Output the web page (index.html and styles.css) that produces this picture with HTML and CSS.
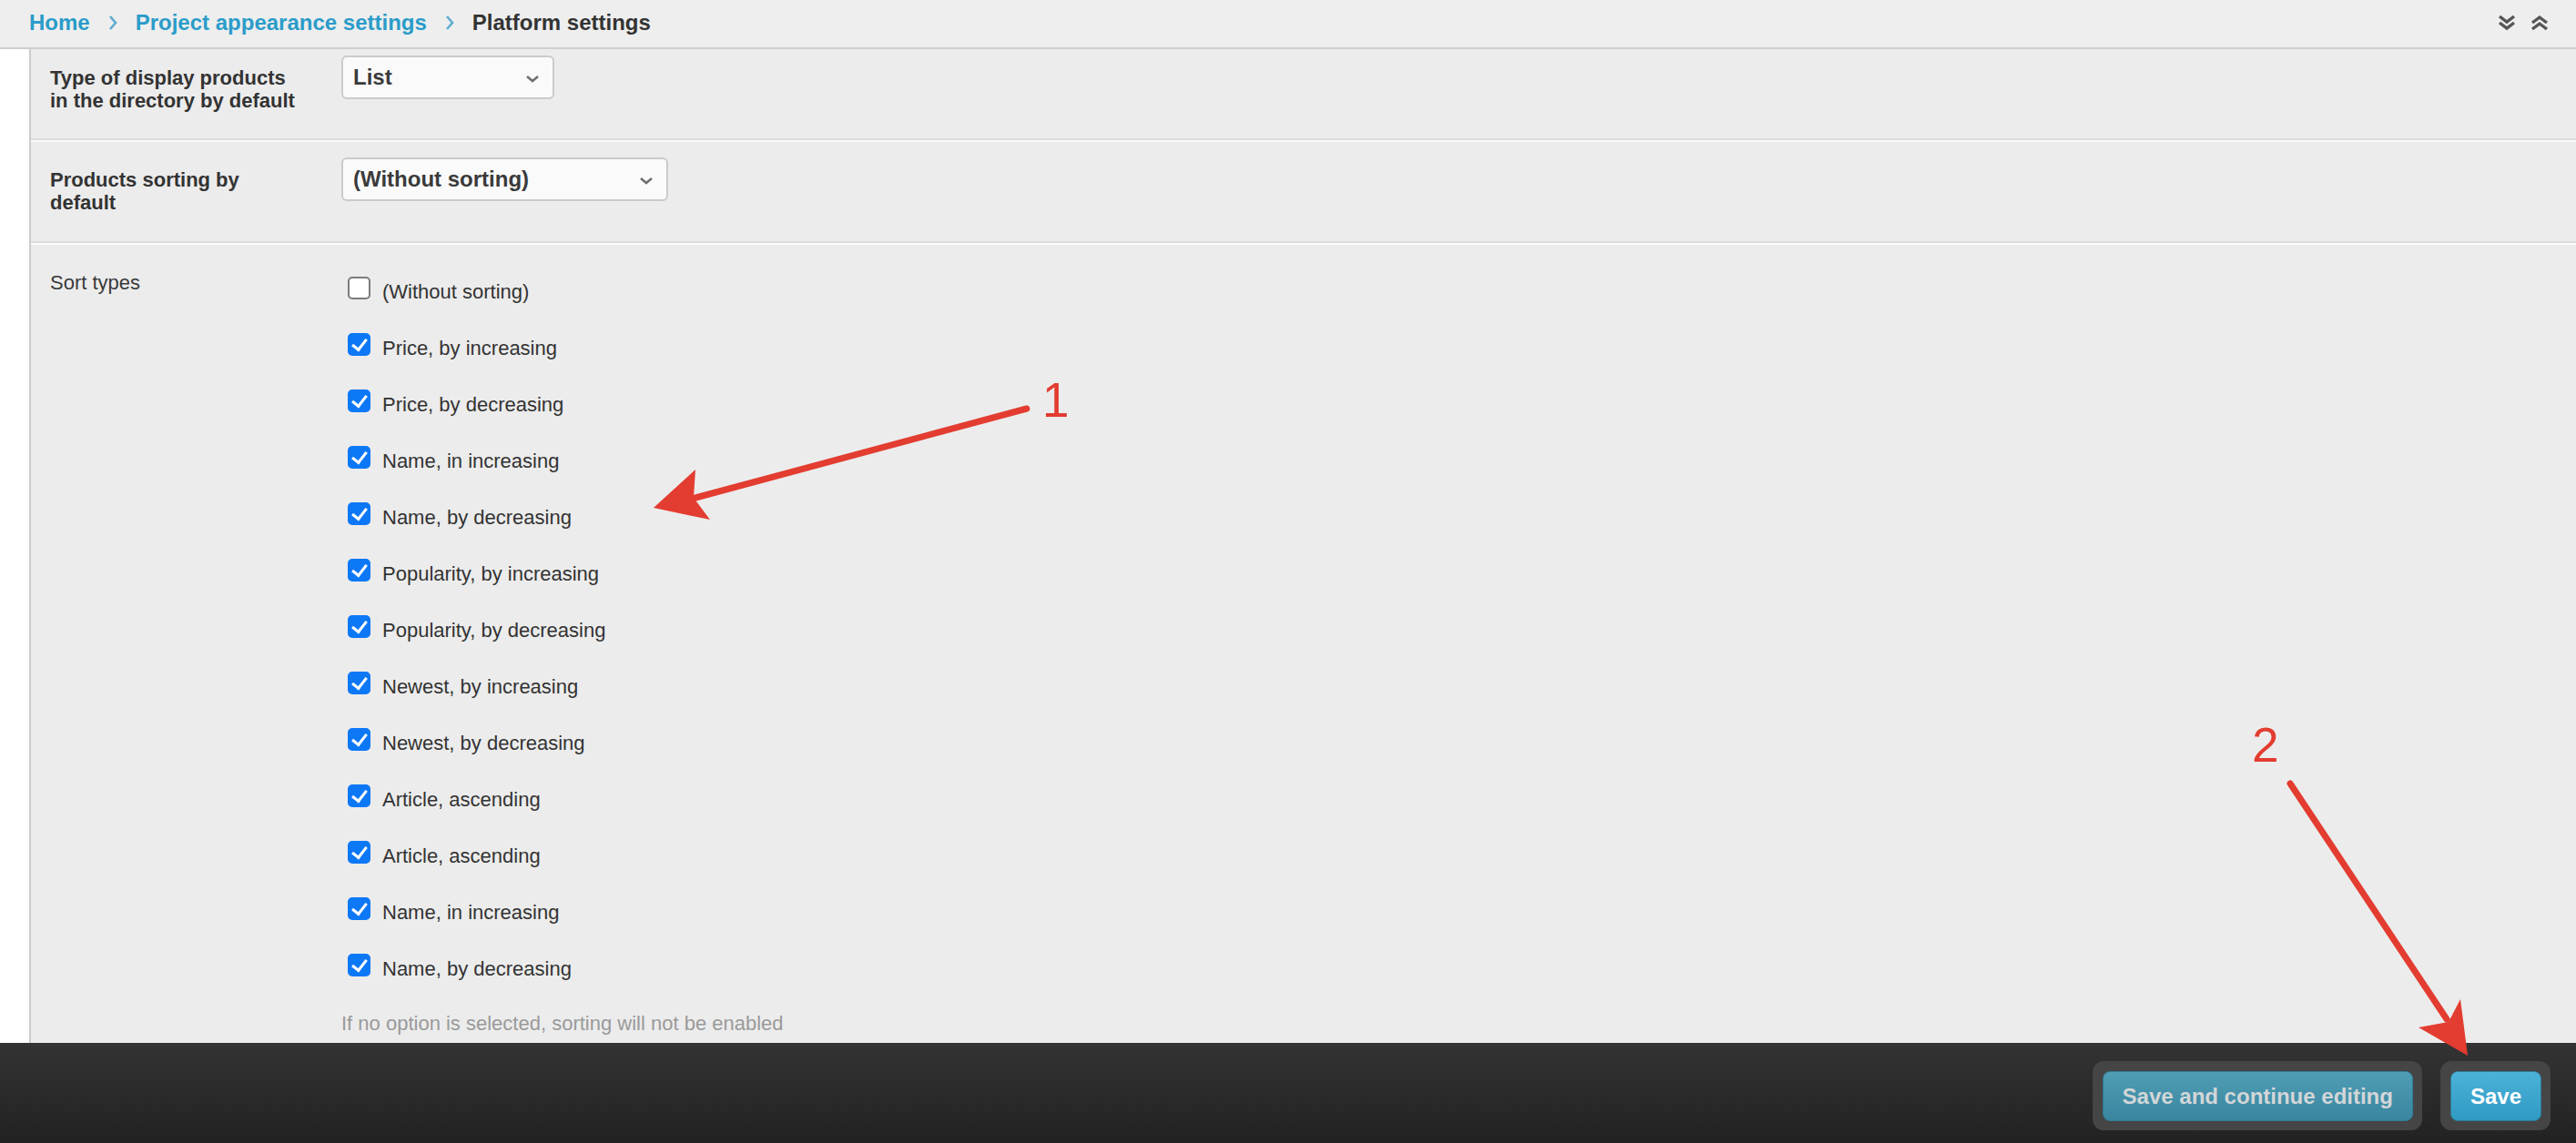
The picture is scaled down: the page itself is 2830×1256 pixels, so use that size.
FILE: index.html
```html
<!DOCTYPE html>
<html lang="en">
<head>
  <meta charset="UTF-8" />
  <title>Platform settings</title>
  <link rel="stylesheet" href="styles.css">
</head>
<body>

  <!-- Breadcrumbs -->
  <div class="breadcrumb">
    <div class="crumbs">
      <a href="#">Home</a>
      <svg class="sep" viewBox="0 0 10 18"><polyline points="2,2 8,9 2,16" /></svg>
      <a href="#">Project appearance settings</a>
      <svg class="sep" viewBox="0 0 10 18"><polyline points="2,2 8,9 2,16" /></svg>
      <span class="current">Platform settings</span>
    </div>
    <div class="collapse-icons">
      <svg viewBox="0 0 22 20"><polyline points="3,3 11,9 19,3" /><polyline points="3,10 11,16 19,10" /></svg>
      <svg viewBox="0 0 22 20"><polyline points="3,10 11,4 19,10" /><polyline points="3,17 11,11 19,17" /></svg>
    </div>
  </div>

  <div class="page">
    <div class="sidebar"></div>

    <div class="content">
      <div class="row row-first">
        <div class="row-label"><span>Type of display products in the directory by default</span></div>
        <div class="field">
          <div class="select select-short">
            List
            <svg class="select-arrow" viewBox="0 0 16 10"><polyline points="2,2 8,7 14,2" /></svg>
          </div>
        </div>
      </div>

      <div class="row">
        <div class="row-label"><span>Products sorting by default</span></div>
        <div class="field">
          <div class="select select-wide">
            (Without sorting)
            <svg class="select-arrow" viewBox="0 0 16 10"><polyline points="2,2 8,7 14,2" /></svg>
          </div>
        </div>
      </div>

      <div class="row">
        <div class="row-label plain"><span>Sort types</span></div>
        <div class="field">
          <div class="options">
            <label class="option"><input type="checkbox"><span>(Without sorting)</span></label>
            <label class="option"><input type="checkbox" checked><span>Price, by increasing</span></label>
            <label class="option"><input type="checkbox" checked><span>Price, by decreasing</span></label>
            <label class="option"><input type="checkbox" checked><span>Name, in increasing</span></label>
            <label class="option"><input type="checkbox" checked><span>Name, by decreasing</span></label>
            <label class="option"><input type="checkbox" checked><span>Popularity, by increasing</span></label>
            <label class="option"><input type="checkbox" checked><span>Popularity, by decreasing</span></label>
            <label class="option"><input type="checkbox" checked><span>Newest, by increasing</span></label>
            <label class="option"><input type="checkbox" checked><span>Newest, by decreasing</span></label>
            <label class="option"><input type="checkbox" checked><span>Article, ascending</span></label>
            <label class="option"><input type="checkbox" checked><span>Article, ascending</span></label>
            <label class="option"><input type="checkbox" checked><span>Name, in increasing</span></label>
            <label class="option"><input type="checkbox" checked><span>Name, by decreasing</span></label>
          </div>
          <div class="hint">If no option is selected, sorting will not be enabled</div>
        </div>
      </div>
    </div>
  </div>

  <!-- Footer actions -->
  <div class="footer">
    <div class="btn-wrap"><button class="btn btn-secondary">Save and continue editing</button></div>
    <div class="btn-wrap"><button class="btn btn-primary">Save</button></div>
  </div>

  <!-- Annotation arrows -->
  <svg class="annotations" viewBox="0 0 2830 1256">
    <line x1="1128" y1="449" x2="764" y2="547" />
    <polygon points="718,558 764,516 762,547 780,571" />
    <text x="1145" y="458">1</text>

    <line x1="2516" y1="861" x2="2688" y2="1120" />
    <polygon points="2711,1160 2703,1098 2690,1123 2657,1129" />
    <text x="2474" y="837">2</text>
  </svg>

</body>
</html>
```

FILE: styles.css
```css
* {
  box-sizing: border-box;
}
body {
  margin: 0;
  font-family: "Liberation Sans", Arial, sans-serif;
  color: #333;
  background: #fff;
  height: 100vh;
  display: flex;
  flex-direction: column;
  overflow: hidden;
  position: relative;
}

/* Breadcrumbs */
.breadcrumb {
  flex-shrink: 0;
  height: 54px;
  background: #eee;
  border-bottom: 2px solid #cfcfcf;
  display: flex;
  align-items: center;
  justify-content: space-between;
  padding: 0 29px 2px 32px;
  font-size: 24px;
  font-weight: bold;
}
.crumbs {
  display: flex;
  align-items: center;
}
.crumbs a {
  color: #2a9cc9;
  text-decoration: none;
}
.crumbs .current {
  color: #333;
}
.crumbs .sep {
  width: 10px;
  height: 18px;
  margin: 0 20px;
  fill: none;
  stroke: #5eacd0;
  stroke-width: 2.6;
}
.collapse-icons {
  display: flex;
  gap: 14px;
}
.collapse-icons svg {
  width: 22px;
  height: 20px;
  fill: none;
  stroke: #555;
  stroke-width: 3.4;
}

/* Content */
.page {
  flex: 1;
  display: flex;
  min-height: 0;
}
.sidebar {
  width: 32px;
  flex-shrink: 0;
  background: #fff;
}
.content {
  flex: 1;
  background: #ececec;
  border-left: 2px solid #cdcdcd;
  overflow: hidden;
}
.row {
  display: flex;
  padding: 17px 21px 30px;
  border-bottom: 2px solid #dcdcdc;
}
.row + .row {
  border-top: 2px solid #fafafa;
}
.row-first {
  padding-top: 7px;
  padding-bottom: 29px;
}
.row-label {
  width: 320px;
  flex-shrink: 0;
  padding-top: 12px;
  font-size: 22px;
  line-height: 25px;
  font-weight: bold;
}
.row-label span {
  display: block;
  max-width: 276px;
}
.row-label.plain {
  font-weight: normal;
  color: #3a3a3a;
}
.select {
  position: relative;
  height: 48px;
  border: 2px solid #cbcbcb;
  border-radius: 6px;
  background: #fafafa;
  padding-left: 11px;
  font-size: 24px;
  font-weight: bold;
  line-height: 44px;
  color: #3a3a3a;
}
.select-short {
  width: 234px;
}
.select-wide {
  width: 359px;
}
.select-arrow {
  position: absolute;
  right: 14px;
  top: 19px;
  width: 16px;
  height: 10px;
  fill: none;
  stroke: #707070;
  stroke-width: 2.6;
}

/* Sort types */
.options {
  padding-top: 18px;
}
.option {
  display: flex;
  gap: 13px;
  margin-left: 7px;
  font-size: 22px;
  line-height: 25px;
  color: #333;
}
.option + .option {
  margin-top: 33px;
}
.option span {
  padding-top: 4px;
}
.option input {
  appearance: none;
  -webkit-appearance: none;
  position: relative;
  flex-shrink: 0;
  width: 25px;
  height: 25px;
  margin: 0;
  border: 2px solid #7b7b7b;
  border-radius: 5px;
  background: #fff;
}
.option input:checked {
  background: #0d78f6;
  border-color: #0d78f6;
}
.option input:checked::after {
  content: "";
  position: absolute;
  left: 6px;
  top: 1px;
  width: 7px;
  height: 13px;
  border: solid #fff;
  border-width: 0 3.5px 3.5px 0;
  transform: rotate(38deg);
}
.hint {
  margin-top: 35px;
  font-size: 22px;
  line-height: 25px;
  color: #9a9a9a;
}

/* Footer */
.footer {
  flex-shrink: 0;
  height: 110px;
  background: linear-gradient(#333, #222);
  display: flex;
  justify-content: flex-end;
  align-items: flex-start;
  gap: 20px;
  padding: 20px 28px 0 0;
}
.btn-wrap {
  background: #454545;
  border-radius: 12px;
  padding: 11px 10px 10px 11px;
}
.btn {
  display: block;
  height: 55px;
  padding: 0 21px;
  border: 1px solid #2e7b96;
  border-radius: 8px;
  font-family: "Liberation Sans", Arial, sans-serif;
  font-size: 24px;
  font-weight: bold;
  line-height: 53px;
  cursor: pointer;
}
.btn-secondary {
  background: linear-gradient(#4f9db5, #3a859f);
  color: #d2d6d8;
}
.btn-primary {
  background: linear-gradient(#4cb2d8, #2f9ac3);
  color: #fff;
}

/* Annotations */
.annotations {
  position: absolute;
  left: 0;
  top: 0;
  width: 2830px;
  height: 1256px;
  pointer-events: none;
}
.annotations line {
  stroke: #e33c30;
  stroke-width: 7;
  stroke-linecap: round;
}
.annotations polygon {
  fill: #e33c30;
}
.annotations text {
  fill: #e33c30;
  font-family: "Liberation Sans", Arial, sans-serif;
  font-size: 53px;
}
```
